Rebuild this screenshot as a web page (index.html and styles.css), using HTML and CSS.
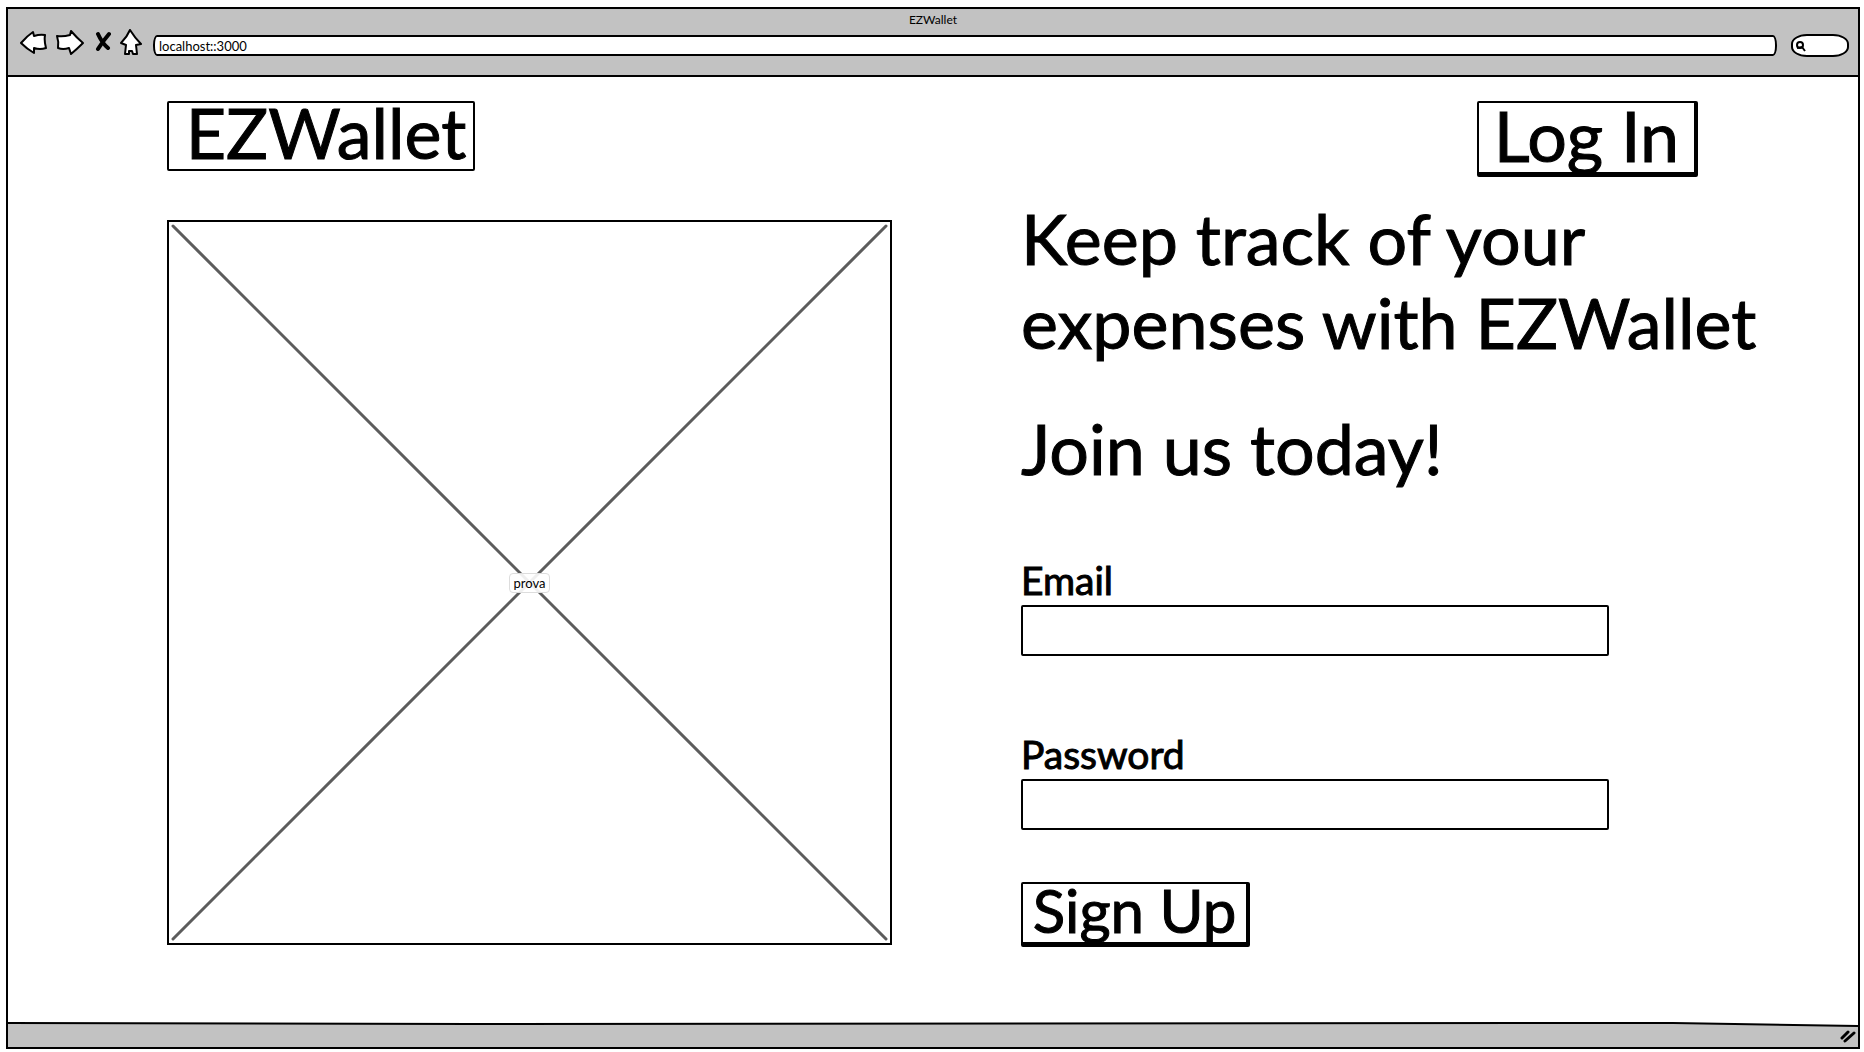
FILE: index.html
```html
<!DOCTYPE html>
<html lang="en">
<head>
<meta charset="utf-8">
<title>EZWallet</title>
<link rel="stylesheet" href="styles.css">
</head>
<body>
<div class="window">
  <div class="chrome">
    <div class="chrome-title">EZWallet</div>
    <div class="toolbar">
      <button class="tool" type="button" aria-label="Back"><svg width="28" height="28" viewBox="19 28 28 28"><path class="shape" d="M21 42 Q27 35 33 31 L34 35 Q40 33 45 34 Q44 40 46 47 Q40 49 34 47 L34 52 Q27 48 21 42Z"/></svg></button>
      <button class="tool" type="button" aria-label="Forward"><svg width="32" height="28" viewBox="55 28 32 28"><path class="shape" d="M57 35 Q63 36 70 34 L71 30 Q77 37 83 42 Q77 48 71 53 L69 47 Q63 49 58 47 Q59 41 57 35Z"/></svg></button>
      <button class="tool" type="button" aria-label="Stop"><svg width="16" height="28" viewBox="95 28 16 28"><path class="cross" d="M98 33 Q102 42 108 47 M109 33 Q103 40 98 48"/></svg></button>
      <button class="tool" type="button" aria-label="Home"><svg width="26" height="28" viewBox="119 28 26 28"><path class="shape" d="M130 29 Q135 37 141 43 L136 44 L137 53 L133 53 L132 50 L129 50 L129 53 L125 53 L126 44 L121 42 Q127 36 130 29Z"/></svg></button>
      <input class="address" type="text" aria-label="Address" value="localhost::3000">
      <label class="search">
        <svg width="12" height="12" viewBox="0 0 12 12"><circle cx="5" cy="5" r="3"/><path d="M2 8 L7 7 L10 11"/></svg>
        <input type="text" aria-label="Search">
      </label>
    </div>
  </div>

  <main class="page">
    <header class="top">
      <a class="logo" href="#">EZWallet</a>
      <button class="btn btn-login" type="button">Log In</button>
    </header>
    <div class="columns">
      <div class="picture">
        <svg class="picture-cross" viewBox="0 0 720 720"><path d="M4 4 L716 716 M716 4 L4 716"/></svg>
        <span class="picture-label">prova</span>
      </div>
      <section class="intro">
        <h1>Keep track of your expenses with EZWallet</h1>
        <p class="join">Join us today!</p>
        <form class="form">
          <div class="field">
            <label for="email">Email</label>
            <input id="email" type="email">
          </div>
          <div class="field">
            <label for="password">Password</label>
            <input id="password" type="password">
          </div>
          <button class="btn btn-signup" type="button">Sign Up</button>
        </form>
      </section>
    </div>
  </main>

  <footer class="status">
    <svg class="status-bar" viewBox="0 0 1000 25" preserveAspectRatio="none"><path class="fill" d="M0 1 L250 2 L900 1 L1000 4 L1000 25 L0 25Z"/><path class="edge" d="M0 1 L250 2 L900 1 L1000 4"/></svg>
    <svg class="grip" width="16" height="14" viewBox="0 0 16 14"><path d="M2 9 L8 3 M5 12 L14 4"/></svg>
  </footer>
</div>
</body>
</html>
```
FILE: styles.css
```css
* { box-sizing: border-box; }

body {
  margin: 0;
  padding: 7px 4px 3px 6px;
  background: #fff;
  color: #000;
  font-family: Lato, "Liberation Sans", sans-serif;
}

button, input {
  font: inherit;
  color: inherit;
  margin: 0;
}

.window {
  min-height: calc(100vh - 10px);
  display: flex;
  flex-direction: column;
  border: 2px solid #000;
}

/* Browser bar */
.chrome {
  height: 68px;
  background: #c2c2c2;
  border-bottom: 2px solid #000;
}

.chrome-title {
  height: 19px;
  line-height: 21px;
  text-align: center;
  font-size: 12px;
}

.toolbar {
  display: flex;
  align-items: center;
  gap: 8px;
  padding: 0 9px 0 11px;
}

.tool {
  display: flex;
  padding: 0;
  border: 0;
  background: none;
}

.shape {
  fill: #fff;
  stroke: #000;
  stroke-width: 2;
  stroke-linejoin: round;
}

.cross {
  fill: none;
  stroke: #000;
  stroke-width: 4;
  stroke-linecap: round;
}

.address {
  flex: 1;
  min-width: 0;
  height: 21px;
  margin: 6px 6px 0 0;
  padding: 0 4px;
  border: 2px solid #000;
  border-radius: 4px / 10px;
  background: #fff;
  font-size: 13px;
}

.search {
  display: flex;
  align-items: center;
  width: 58px;
  height: 23px;
  margin-top: 6px;
  padding-left: 2px;
  border: 2px solid #000;
  border-radius: 16px / 10px;
  background: #fff;
}

.search svg {
  flex: none;
  fill: none;
  stroke: #000;
  stroke-width: 2;
}

.search input {
  flex: 1;
  min-width: 0;
  padding: 0;
  border: 0;
  background: none;
  font-size: 12px;
}

/* Page */
.page {
  flex: 1;
  padding: 24px 78px 60px 159px;
}

.top {
  display: flex;
  justify-content: space-between;
  align-items: flex-start;
  height: 119px;
  padding-right: 82px;
}

.logo {
  width: 308px;
  height: 70px;
  padding-left: 10px;
  border: 2px solid #000;
  border-radius: 2px;
  color: #000;
  text-decoration: none;
  text-align: center;
  font-size: 70px;
  line-height: 58px;
  white-space: nowrap;
  -webkit-text-stroke: 1px #000;
}

.btn {
  padding: 0 0 6px;
  border: 2px solid #000;
  border-width: 2px 4px 5px 2px;
  border-radius: 2px;
  background: #fff;
  white-space: nowrap;
  -webkit-text-stroke: 1px #000;
}

.btn-login {
  width: 221px;
  height: 76px;
  font-size: 70px;
  line-height: 58px;
}

.btn-signup {
  width: 229px;
  height: 65px;
  font-size: 60px;
  line-height: 50px;
}

.columns {
  display: grid;
  grid-template-columns: 725fr 759fr;
  column-gap: 129px;
}

.picture {
  display: grid;
  place-items: center;
  align-self: start;
  aspect-ratio: 1;
  border: 2px solid #000;
}

.picture-cross,
.picture-label {
  grid-area: 1 / 1;
}

.picture-cross {
  width: 100%;
  height: 100%;
  fill: none;
  stroke: #5c5c5c;
  stroke-width: 3;
  stroke-linecap: round;
}

.picture-label {
  z-index: 1;
  padding: 0 4px;
  border: 1px solid #ddd;
  border-radius: 4px;
  background: rgba(255, 255, 255, 0.9);
  font-size: 13px;
  line-height: 18px;
}

.intro h1,
.join {
  margin: 0;
  font-size: 70px;
  font-weight: 400;
  line-height: 84px;
  -webkit-text-stroke: 1px #000;
}

.intro h1 { margin-top: -24px; }

.join { margin-top: 42px; }

.form {
  display: flex;
  flex-direction: column;
  align-items: flex-start;
  gap: 52px;
  margin-top: 67px;
}

.field {
  width: 100%;
  max-width: 588px;
}

.field + .field { margin-top: 23px; }

.field label {
  display: block;
  height: 48px;
  line-height: 46px;
  font-size: 39px;
  -webkit-text-stroke: 1px #000;
}

.field input {
  display: block;
  width: 100%;
  height: 51px;
  padding: 0 8px;
  border: 2px solid #000;
  border-radius: 2px;
  background: #fff;
  font-size: 32px;
}

/* Status bar */
.status {
  display: grid;
  height: 25px;
}

.status-bar,
.grip {
  grid-area: 1 / 1;
}

.status-bar {
  width: 100%;
  height: 25px;
}

.status-bar .fill { fill: #c2c2c2; }

.status-bar .edge {
  fill: none;
  stroke: #000;
  stroke-width: 2;
  vector-effect: non-scaling-stroke;
}

.grip {
  place-self: end;
  margin: 0 2px 4px 0;
  fill: none;
  stroke: #000;
  stroke-width: 3;
  stroke-linecap: round;
}
```
